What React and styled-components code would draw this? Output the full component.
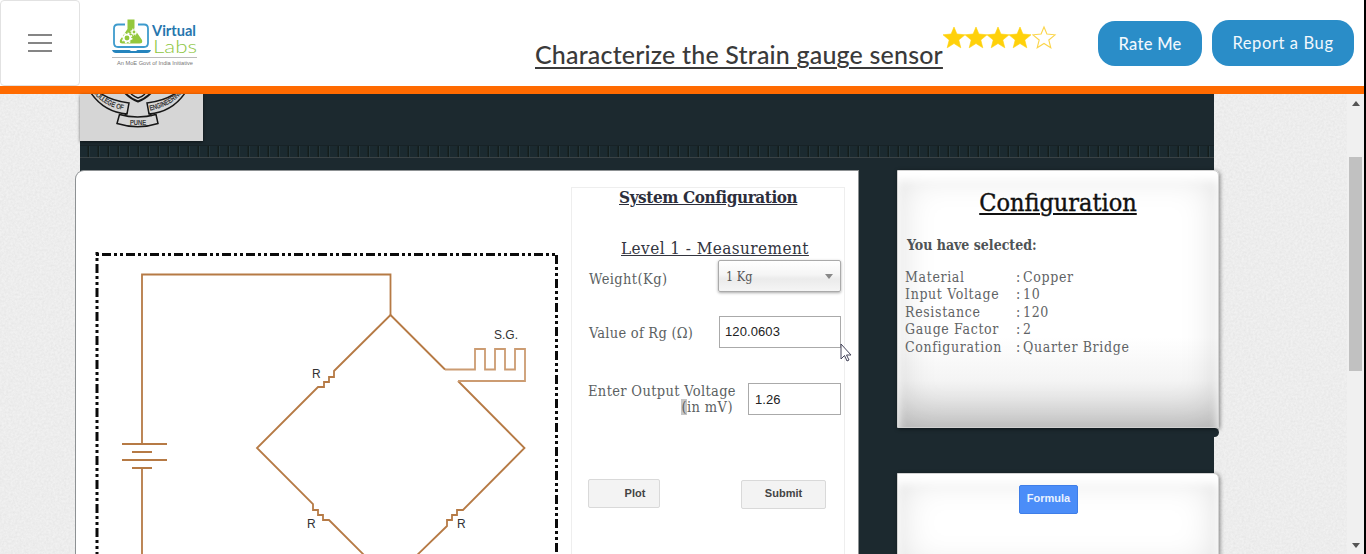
import React from "react";
import styled, { createGlobalStyle } from "styled-components";

const Global = createGlobalStyle`
  * { box-sizing: border-box; }
  body { margin: 0; background: #ececec; overflow: hidden; }
  h1, h2, h3, p { margin: 0; font-weight: normal; }
`;
const serif = `"Droid Serif", "DejaVu Serif Condensed", "DejaVu Serif", serif`;
const sans = `"Liberation Sans", Arial, sans-serif`;

const Page = styled.div`
  width: 1366px; height: 554px; overflow: hidden;
  display: flex; flex-direction: column;
  border-right: 2px solid #000;
`;
const Header = styled.header`
  height: 94px; flex: none; display: flex; align-items: flex-start;
  background: #fff; border-bottom: 8px solid #ff6a00;
`;
const MenuButton = styled.button`
  width: 80px; height: 86px; padding: 33px 0 0; flex: none;
  display: flex; flex-direction: column; align-items: center; gap: 6px;
  background: #fff; border: 1px solid #e2e2e2; border-radius: 4px;
  span { width: 24px; height: 2px; background: #858585; }
`;
const Logo = styled.svg`display: block; margin: 16px 0 0 31px; flex: none;`;
const Title = styled.h1`
  margin: 39px 0 0 334px; width: 408px; flex: none; white-space: nowrap;
  font: 500 25px/30px Lato, sans-serif; letter-spacing: ${p => p.$track}px;
  color: #3a3a3a; text-decoration: underline; text-decoration-thickness: 2px; text-underline-offset: 3px;
`;
const Stars = styled.div`
  display: flex; margin-top: 26px; width: 155px; flex: none;
  svg { width: 22px; height: 23px; flex: none; overflow: visible; fill: #ffd10a; stroke: #ffd10a; stroke-width: 0.6px; }
  svg:last-child { margin-left: 2px; width: 22px; fill: none; stroke: #fbd54a; stroke-width: 1.1px; }
`;
const Pill = styled.button`
  flex: none; width: ${p => p.$w}px; height: ${p => p.$h}px; margin: ${p => p.$m};
  padding: 0; border: 0; border-radius: 17px; background: #2a8dc8; color: #f1f8fd;
  font: ${p => p.$weight} 16.5px Lato, sans-serif; letter-spacing: ${p => p.$track}px;
`;

const Body = styled.main`flex: 1; display: flex; position: relative; min-height: 0;`;
const Paper = styled.svg`position: absolute; inset: 0; width: 100%; height: 100%;`;
const Site = styled.div`
  position: relative; margin-left: 80px; width: 1134px; height: 460px; background: #1c292f;
`;
const Banner = styled.div`height: 47px; svg { display: block; box-shadow: 0 1px 3px #0008; }`;
const Band = styled.div`
  height: 13px; margin: 4px 0 12px; border-bottom: 1px solid #3a4245; border-top: 1px solid #172226;
  background: repeating-linear-gradient(90deg, #1b2a30 0 7px, #141d1b 8px 9px, #25373d 9px 10px);
`;
const Columns = styled.div`display: flex; align-items: flex-start; margin: 0 -5px; gap: 38px;`;
const Bench = styled.section`
  width: 784px; height: 384px; display: flex; background: #fff; overflow: hidden;
  border: 1px solid #8d9193; border-bottom: 0; border-radius: 9px 0 0 0;
`;
const Diagram = styled.svg`display: block; flex: none;`;
const Form = styled.div`
  width: 274px; margin-top: 16px; height: 380px; border: 1px solid #eee;
  padding-left: 17px; font: 14.5px/16px ${serif}; color: #5b5f62;
`;
const FormTitle = styled.h2`
  font: bold 17px/22px ${serif}; color: #2c2e3b; text-decoration: underline;
  letter-spacing: ${p => p.$track}px; margin: -2px 0 0 30px; white-space: nowrap;
`;
const Level = styled.h3`
  font: 17px/22px ${serif}; color: #33353f; text-decoration: underline; white-space: nowrap;
  letter-spacing: ${p => p.$track}px; margin: 29px 0 0 32px;
`;
const Field = styled.div`
  display: flex; justify-content: space-between; height: 32px; width: 252px; margin-top: ${p => p.$top}px;
`;
const Label = styled.label`
  padding-top: ${p => p.$top}px; margin-left: ${p => p.$left || 0}px;
  white-space: nowrap; letter-spacing: ${p => p.$track}px;
  text-align: right; mark { background: #c6c6c6; color: inherit; }
  span { margin-right: 3px; letter-spacing: 0.4px; }
`;
const Select = styled.div`
  width: 123px; height: 32px; margin-right: 0; padding: 0 7px; display: flex;
  justify-content: space-between; align-items: center; color: #555;
  font: 12.5px ${serif}; border: 1px solid #aaa; border-radius: 2px;
  background: linear-gradient(#fff, #f5f5f5 45%, #ebebeb 60%, #f5f5f5);
  box-shadow: 0 1px 3px #0005;
`;
const Input = styled.input`
  width: ${p => p.$w}px; height: 32px; padding: ${p => p.$pad}; border: 1px solid #aaa; border-radius: 0;
  font: 13px ${sans}; color: #222; background: #fff; letter-spacing: ${p => p.$track}px;
`;
const Buttons = styled.div`display: flex; justify-content: space-between; width: 238px; margin: 64px 0 0 -1px;`;
const FormButton = styled.button`
  width: ${p => p.$w}px; height: 29px; margin-top: ${p => p.$top || 0}px; padding: ${p => p.$pad};
  border: 1px solid #d9d9d9; border-radius: 2px;
  background: #f3f3f3; color: #444; font: bold 11px ${sans}; text-align: center;
`;
const Side = styled.div`width: 322px; height: 384px; display: flex; flex-direction: column;`;
const Knob = styled.i`
  display: block; flex: none; align-self: flex-end; width: 18px; height: 9px;
  border-radius: 0 5px 5px 0; background: #1c292f;
`;
const Card = styled.section`
  position: relative; height: ${p => p.$h}px; margin-top: ${p => p.$mt || 0}px; flex: none;
  border: 1px solid #d2d2d2; border-radius: 0 5px 0 0; overflow: hidden;
  background: ${p => p.$shade ? "linear-gradient(#fff 65%, #f4f4f4 82%, #cfcfcf)" : "#fff"};
  box-shadow: inset 0 10px 10px #fff, inset 0 0 38px rgba(0,0,0,0.15), 1px 1px 4px #0007;
`;
const CardTitle = styled.h2`
  font: 25px/34px ${serif}; color: #111; text-align: center; margin-top: 15px;
  text-decoration: underline; text-decoration-thickness: 2px; text-underline-offset: 2px;
  letter-spacing: ${p => p.$track}px; -webkit-text-stroke: 0.4px #111;
`;
const Chosen = styled.p`font: bold 14px/20px ${serif}; color: #4f5355; margin: 15px 0 0 9px; letter-spacing: ${p => p.$track}px;`;
const Facts = styled.dl`
  margin: 14px 0 0 7px; display: grid; grid-template-columns: 111px 1fr; font: 14px/17.4px ${serif}; color: #5f6365;
  letter-spacing: 0.65px;
  dt, dd { margin: 0; white-space: nowrap; }
  dd span { display: inline-block; width: 7px; }
`;
const Formula = styled.button`
  display: block; width: 59px; height: 29px; margin: 11px 0 0 121px; padding: 0 0 3px;
  border: 1px solid #3f7ee8; border-radius: 2px; background: #4b8df8; color: #eaf2ff; font: bold 11px ${sans};
`;
const Scrollbar = styled.div`
  position: relative; margin-left: auto; width: 17px; background: #f0f0f0;
  display: flex; flex-direction: column; align-items: center; padding: 7px 0 6px;
`;
const Thumb = styled.div`width: 13px; height: 214px; background: #c1c1c1; margin: 51px 0 auto;`;
const Arrow = styled.i`
  border: 4px solid transparent; border-top-width: 0; border-bottom: 5px solid ${p => p.$color || "#555"};
  transform: rotate(${p => p.$down ? 180 : 0}deg);
`;
const Cursor = styled.svg`position: absolute; left: 840px; top: 249px;`;

const facts = [["Material", "Copper"], ["Input Voltage", "10"], ["Resistance", "120"], ["Gauge Factor", "2"], ["Configuration", "Quarter Bridge"]];

const Star = () => (
  <svg viewBox="0 0 22 22"><path d="M11 .5l2.900 7 8.100.8-6.200 5.200 2 7.800L11 17l-6.800 4.300 2-7.800L0 8.300l8.100-.8z" /></svg>
);

function VirtualLabsLogo() {
  return (
    <Logo width="90" height="54" viewBox="111 16 90 54">
      <path d="M125 24.500h-7q-4 0-4 4V43q0 4 4 4h26q4 0 4-4V28.500q0-4-4-4h-6" fill="none" stroke="#3e9bcd" strokeWidth="1.800" />
      <path d="M112 50h17.500l1.500 1h5l1.500-1H151q-1 3-4 3h-31q-3 0-4-3z" fill="#2584bd" />
      <path d="M127.500 19.500h7v9.500l7.500 11q1 3.500-2.500 3.500h-17q-3.500 0-2.500-3.500l7.500-11z" fill="#94c83d" />
      <circle cx="127" cy="38" r="3.400" fill="none" stroke="#fff" strokeWidth="1.900" />
      <circle cx="127" cy="38" r="4.800" fill="none" stroke="#fff" strokeWidth="1.400" strokeDasharray="1.900 1.870" />
      <circle cx="134" cy="32" r="2.100" fill="none" stroke="#fff" strokeWidth="1.400" />
      <circle cx="134" cy="32" r="3.200" fill="none" stroke="#fff" strokeWidth="1" strokeDasharray="1.300 1.210" />
      <text x="152" y="36" textLength="44" lengthAdjust="spacingAndGlyphs" fontFamily="Lato" fontWeight="bold" fontSize="15" fill="#2676ae">Virtual</text>
      <text x="153" y="52.500" textLength="44" lengthAdjust="spacingAndGlyphs" fontFamily="Lato" fontWeight="300" fontSize="17.500" fill="#8dc63f">Labs</text>
      <path d="M112 57.500h85" stroke="#bbb" />
      <text x="117" y="64.500" textLength="76" lengthAdjust="spacingAndGlyphs" fontFamily="Liberation Sans" fontSize="5.800" fill="#777">An MoE Govt of India Initiative</text>
    </Logo>
  );
}

function Emblem() {
  return (
    <svg width="123" height="47" viewBox="80 94 123 47">
      <path d="M80 94h123v47H80z" fill="#d6d6d6" />
      <defs>
        <path id="left" d="M93 92Q104 107 127 110.500" />
        <path id="right" d="M150 110.500Q170 107 183 92" />
      </defs>
      <g fill="none" stroke="#171717" strokeWidth="1.500">
        <path d="M125 93q6 6 13 8.500q7-2.500 13-8.500" strokeWidth="2" />
        <path d="M131 94q4 3 7 4q4-1 7-4" />
        <path d="M91 93Q104 112 127 114l2-11Q112 101 100 93M185 93Q172 112 149 114l-2-11Q164 101 176 93" />
        <path d="M127 113l-3 3M149 113l3 3M119.500 114.500q18 5 36.500 0l2 9q-20 6.500-41 0z" />
      </g>
      <g fontFamily="Liberation Sans" fill="#222" stroke="#222" strokeWidth=".2" fontSize="7">
        <text><textPath href="#left" textLength="36" lengthAdjust="spacingAndGlyphs">COLLEGE OF</textPath></text>
        <text><textPath href="#right" textLength="38" lengthAdjust="spacingAndGlyphs">ENGINEERING</textPath></text>
        <text x="130" y="124.500" textLength="16" lengthAdjust="spacingAndGlyphs">PUNE</text>
      </g>
    </svg>
  );
}

function Circuit() {
  return (
    <Diagram width="495" height="384" viewBox="76 171 495 384">
      <g stroke="#0a0a0a" strokeWidth="3" fill="none">
        <path d="M96 254.500H555" strokeDasharray="3 3 9 3 3 3" />
        <path d="M97 252V560" strokeDasharray="3 3 3 3 9 3" />
        <path d="M556.500 255V560" strokeDasharray="9 3 3 3 3 3" />
      </g>
      <g stroke="#b67a45" strokeWidth="1.800" fill="none">
        <path d="M142 444V274.500H390.500V315M142 468V560M122 444h45M132 452h20M122 460h45M132 468h20" />
        <path d="M390.500 315L334 371v6h-5v5h-5v5h-6L257 448l56 56v6h5v5h5v5h6L370 561M390.500 315L445 369.500" />
        <path d="M458 381L524.500 448L463 510h-6v5h-5v5h-5v6L412 560" />
        <path d="M445 369.500h30V349h10v20.500h10V349h10v20.500h10V349h10v32H458" stroke="#cc9c72" />
      </g>
      <g fontFamily="Liberation Sans" fontSize="12" fill="#333">
        <text x="312" y="378">R</text><text x="307" y="528">R</text><text x="457" y="528">R</text>
        <text x="494" y="339" textLength="24">S.G.</text>
      </g>
    </Diagram>
  );
}

export default function App() {
  return (
    <Page>
      <Global />
      <Header>
        <MenuButton aria-label="Menu"><span /><span /><span /></MenuButton>
        <VirtualLabsLogo />
        <Title $track={0.18}>Characterize the Strain gauge sensor</Title>
        <Stars><Star /><Star /><Star /><Star /><Star /></Stars>
        <Pill $w={104} $h={45} $m="21px 10px 0 0" $weight={500} $track={0.3}>Rate Me</Pill>
        <Pill $w={142} $h={46} $m="20px 0 0" $weight={400} $track={0.6}>Report a Bug</Pill>
      </Header>
      <Body>
        <Paper aria-hidden="true">
          <filter id="grain"><feTurbulence type="fractalNoise" baseFrequency=".45" numOctaves="3" /><feColorMatrix values="0 0 0 0 .5  0 0 0 0 .5  0 0 0 0 .5  .3 0 0 0 -.07" /></filter>
          <rect width="100%" height="100%" fill="#f1f1f1" /><rect width="100%" height="100%" filter="url(#grain)" />
        </Paper>
        <Site>
          <Banner><Emblem /></Banner>
          <Band />
          <Columns>
            <Bench>
              <Circuit />
              <Form>
                <FormTitle $track={-0.42}>System Configuration</FormTitle>
                <Level $track={0.44}>Level 1 - Measurement</Level>
                <Field $top={1}><Label $top={11} $track={0.4}>Weight(Kg)</Label><Select>1 Kg<Arrow $down $color="#888" /></Select></Field>
                <Field $top={24}><Label $top={9} $track={0.25}>Value of Rg (Ω)</Label><Input $w={122} $track={0.1} $pad="0 5px 2px" defaultValue="120.0603" /></Field>
                <Field $top={35}><Label $top={-2} $left={-1} $track={0.35}>Enter Output Voltage<br /><span><mark>(</mark>in mV)</span></Label><Input $w={93} $track={0.1} $pad="0 6px" defaultValue="1.26" /></Field>
                <Buttons><FormButton $w={72} $pad="0 0 2px 22px">Plot</FormButton><FormButton $w={85} $top={1} $pad="0 0 4px">Submit</FormButton></Buttons>
              </Form>
            </Bench>
            <Side>
              <Card $h={258} $shade>
                <CardTitle $track={0}>Configuration</CardTitle>
                <Chosen $track={0}>You have selected:</Chosen>
                <Facts>{facts.map(([k, v]) => <React.Fragment key={k}><dt>{k}</dt><dd><span>:</span>{v}</dd></React.Fragment>)}</Facts>
              </Card>
              <Knob />
              <Card $h={100} $mt={36}><Formula>Formula</Formula></Card>
            </Side>
          </Columns>
        </Site>
        <Scrollbar><Arrow /><Thumb /><Arrow $down /></Scrollbar>
        <Cursor width="12" height="20" viewBox="0 0 12 20"><path d="M1 1v15l3.500-3.500 2.500 5.500 2-1-2.500-5H11z" fill="#fff" stroke="#44445a" /></Cursor>
      </Body>
    </Page>
  );
}
